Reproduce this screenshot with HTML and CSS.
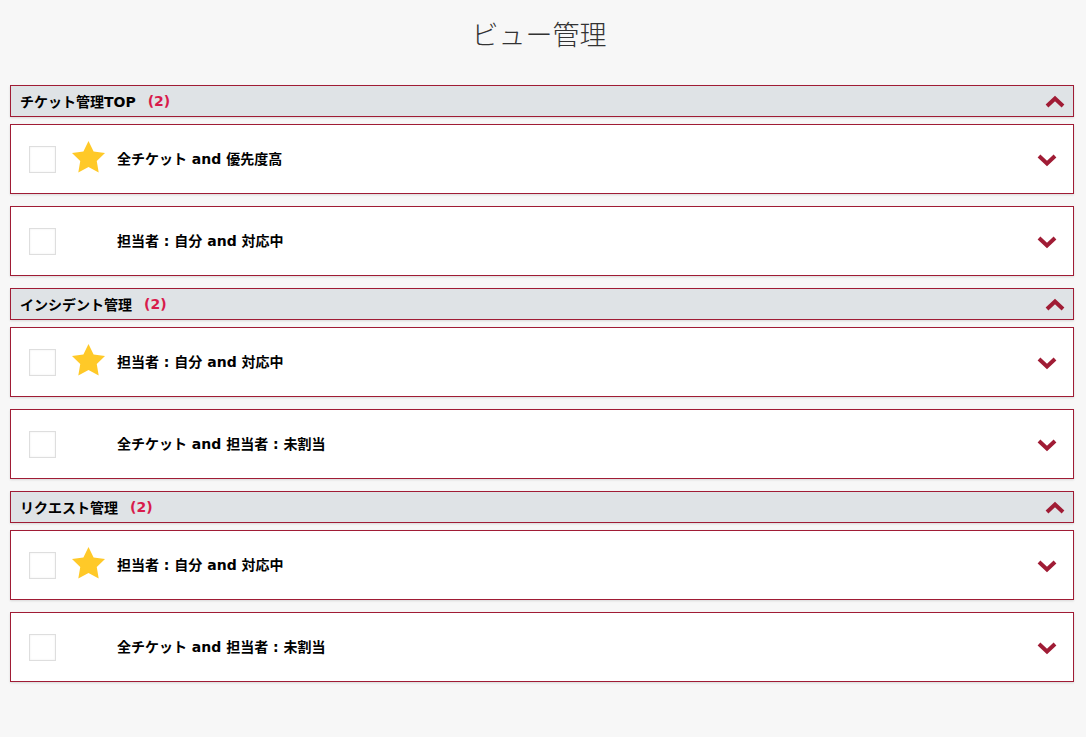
FILE: index.html
```html
<!DOCTYPE html>
<html lang="ja">
<head>
<meta charset="utf-8">
<title>ビュー管理</title>
<link rel="stylesheet" href="styles.css">
</head>
<body>
<div class="page">
  <h1 class="title">ビュー管理</h1>

  <section class="group">
    <div class="group-head">
      <span class="group-name">チケット管理TOP</span><span class="group-count">(2)</span>
      <svg class="chev-up" width="20" height="13" viewBox="0 0 20 13"><polyline points="2,11 10,3.5 18,11" fill="none" stroke="#a01c35" stroke-width="4"/></svg>
    </div>
    <div class="item">
      <span class="check"></span>
      <svg class="star" width="33" height="32" viewBox="2 2 20 19.3"><path d="M12 2l3.09 6.26L22 9.27l-5 4.87 1.18 6.88L12 17.77l-6.18 3.25L7 14.14 2 9.27l6.91-1.01L12 2z" fill="#ffc928"/></svg>
      <span class="label">全チケット and 優先度高</span>
      <svg class="chev-down" width="20" height="13" viewBox="0 0 20 13"><polyline points="2,2 10,9.5 18,2" fill="none" stroke="#a01c35" stroke-width="4"/></svg>
    </div>
    <div class="item">
      <span class="check"></span>
      <span class="star-space"></span>
      <span class="label">担当者 : 自分 and 対応中</span>
      <svg class="chev-down" width="20" height="13" viewBox="0 0 20 13"><polyline points="2,2 10,9.5 18,2" fill="none" stroke="#a01c35" stroke-width="4"/></svg>
    </div>
  </section>

  <section class="group">
    <div class="group-head">
      <span class="group-name">インシデント管理</span><span class="group-count">(2)</span>
      <svg class="chev-up" width="20" height="13" viewBox="0 0 20 13"><polyline points="2,11 10,3.5 18,11" fill="none" stroke="#a01c35" stroke-width="4"/></svg>
    </div>
    <div class="item">
      <span class="check"></span>
      <svg class="star" width="33" height="32" viewBox="2 2 20 19.3"><path d="M12 2l3.09 6.26L22 9.27l-5 4.87 1.18 6.88L12 17.77l-6.18 3.25L7 14.14 2 9.27l6.91-1.01L12 2z" fill="#ffc928"/></svg>
      <span class="label">担当者 : 自分 and 対応中</span>
      <svg class="chev-down" width="20" height="13" viewBox="0 0 20 13"><polyline points="2,2 10,9.5 18,2" fill="none" stroke="#a01c35" stroke-width="4"/></svg>
    </div>
    <div class="item">
      <span class="check"></span>
      <span class="star-space"></span>
      <span class="label">全チケット and 担当者 : 未割当</span>
      <svg class="chev-down" width="20" height="13" viewBox="0 0 20 13"><polyline points="2,2 10,9.5 18,2" fill="none" stroke="#a01c35" stroke-width="4"/></svg>
    </div>
  </section>

  <section class="group">
    <div class="group-head">
      <span class="group-name">リクエスト管理</span><span class="group-count">(2)</span>
      <svg class="chev-up" width="20" height="13" viewBox="0 0 20 13"><polyline points="2,11 10,3.5 18,11" fill="none" stroke="#a01c35" stroke-width="4"/></svg>
    </div>
    <div class="item">
      <span class="check"></span>
      <svg class="star" width="33" height="32" viewBox="2 2 20 19.3"><path d="M12 2l3.09 6.26L22 9.27l-5 4.87 1.18 6.88L12 17.77l-6.18 3.25L7 14.14 2 9.27l6.91-1.01L12 2z" fill="#ffc928"/></svg>
      <span class="label">担当者 : 自分 and 対応中</span>
      <svg class="chev-down" width="20" height="13" viewBox="0 0 20 13"><polyline points="2,2 10,9.5 18,2" fill="none" stroke="#a01c35" stroke-width="4"/></svg>
    </div>
    <div class="item">
      <span class="check"></span>
      <span class="star-space"></span>
      <span class="label">全チケット and 担当者 : 未割当</span>
      <svg class="chev-down" width="20" height="13" viewBox="0 0 20 13"><polyline points="2,2 10,9.5 18,2" fill="none" stroke="#a01c35" stroke-width="4"/></svg>
    </div>
  </section>
</div>
</body>
</html>
```

FILE: styles.css
```css
* { box-sizing: border-box; }
html, body { margin: 0; padding: 0; }
body {
  background: #f7f7f7;
  font-family: "DejaVu Sans", "Noto Sans CJK JP", sans-serif;
  color: #000;
}
.page {
  padding: 0 12px 0 10px;
  display: flex;
  flex-direction: column;
}
.title {
  margin: 0;
  padding-top: 16px;
  padding-right: 6px;
  height: 85px;
  text-align: center;
  font-family: "Noto Sans CJK JP", sans-serif;
  font-weight: 300;
  font-size: 27px;
  line-height: 36px;
  color: #333;
}
.group {
  display: flex;
  flex-direction: column;
  gap: 12px;
  margin-bottom: 12px;
}
.group-head {
  height: 32px;
  border: 1px solid #a01c35;
  background: #dfe3e6;
  display: flex;
  align-items: center;
  padding: 0 8px 0 9px;
  margin-bottom: -5px;
  box-shadow: 0 1px 2px rgba(0,0,0,0.12);
}
.group-name {
  font-size: 14px;
  font-weight: bold;
  margin-top: -1px;
}
.group-count {
  margin-left: 12px;
  font-size: 14px;
  font-weight: bold;
  color: #d81b4c;
  margin-top: -1px;
}
.chev-up { margin-left: auto; }
.item {
  height: 70px;
  border: 1px solid #a01c35;
  background: #fff;
  display: flex;
  align-items: center;
  padding: 0 16px 0 18px;
  box-shadow: 0 1px 2px rgba(0,0,0,0.12);
}
.check {
  width: 27px;
  height: 27px;
  border: 1px solid #dedede;
  background: #fff;
  box-shadow: inset 0 0 2px rgba(0,0,0,0.08);
  flex: none;
}
.star, .star-space {
  flex: none;
  margin-left: 16px;
  margin-top: -5px;
  width: 33px;
  height: 32px;
}
.label {
  margin-left: 12px;
  font-size: 14px;
  font-weight: bold;
  margin-top: -3px;
}
.chev-down { margin-left: auto; margin-top: 2px; }
```
